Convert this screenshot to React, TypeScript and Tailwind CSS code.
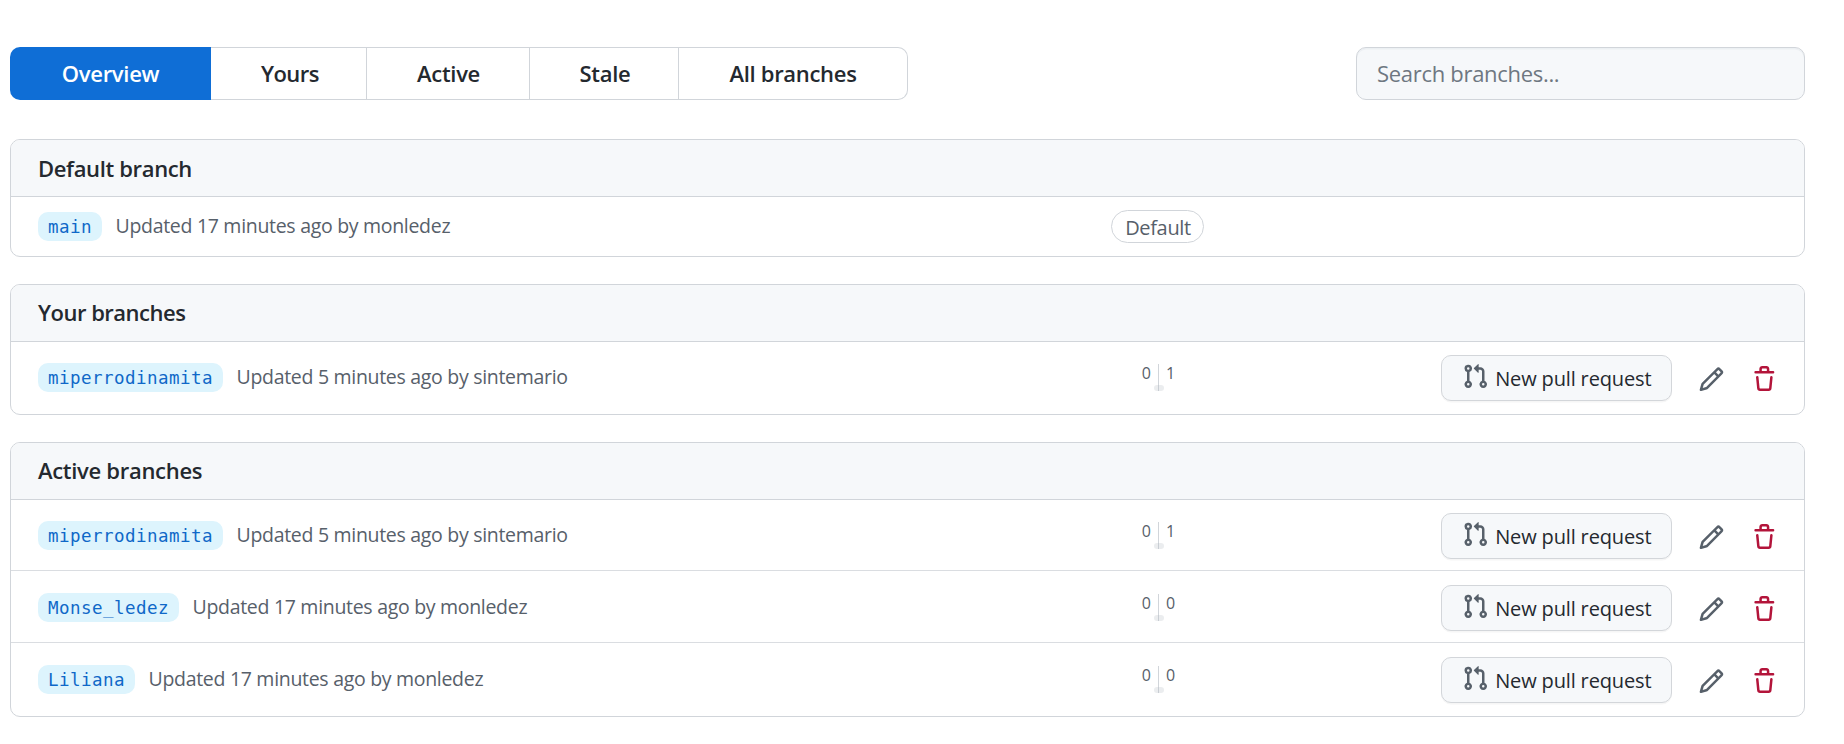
import type { ReactNode } from "react";

type Branch = { name: string; updated: string; behind: number; ahead: number };

const miperrodinamita: Branch = {
  name: "miperrodinamita",
  updated: "Updated 5 minutes ago by sintemario",
  behind: 0,
  ahead: 1,
};

const activeBranches: Branch[] = [
  miperrodinamita,
  { name: "Monse_ledez", updated: "Updated 17 minutes ago by monledez", behind: 0, ahead: 0 },
  { name: "Liliana", updated: "Updated 17 minutes ago by monledez", behind: 0, ahead: 0 },
];

const tabs = [
  { label: "Overview", className: "w-[201px] rounded-l-[10px] bg-[#0f6ed6] text-white" },
  { label: "Yours", className: "w-[156px] border-y border-r border-[#d1d5da] pl-[3px] tracking-[-0.5px]" },
  { label: "Active", className: "w-[163px] border-y border-r border-[#d1d5da] pl-px" },
  { label: "Stale", className: "w-[149px] border-y border-r border-[#d1d5da] pl-[2px]" },
  { label: "All branches", className: "w-[229px] rounded-r-[10px] border-y border-r border-[#d1d5da]" },
];

const icons = {
  pullRequest:
    "M1.5 3.25a2.25 2.25 0 1 1 3 2.122v5.256a2.251 2.251 0 1 1-1.5 0V5.372A2.25 2.25 0 0 1 1.5 3.25Zm5.677-.177L9.573.677A.25.25 0 0 1 10 .854V2.5h1A2.5 2.5 0 0 1 13.5 5v5.628a2.251 2.251 0 1 1-1.5 0V5a1 1 0 0 0-1-1h-1v1.646a.25.25 0 0 1-.427.177L7.177 3.427a.25.25 0 0 1 0-.354ZM3.75 2.5a.75.75 0 1 0 0 1.5.75.75 0 0 0 0-1.5Zm0 9.5a.75.75 0 1 0 0 1.5.75.75 0 0 0 0-1.5Zm8.25.75a.75.75 0 1 0 1.5 0 .75.75 0 0 0-1.5 0Z",
  pencil:
    "M11.013 1.427a1.75 1.75 0 0 1 2.474 0l1.086 1.086a1.75 1.75 0 0 1 0 2.474l-8.61 8.61c-.21.21-.47.364-.756.445l-3.251.93a.75.75 0 0 1-.927-.928l.929-3.25c.081-.286.235-.547.445-.758l8.61-8.61Zm.176 4.823L9.75 4.81l-6.286 6.287a.253.253 0 0 0-.064.108l-.558 1.953 1.953-.558a.253.253 0 0 0 .108-.064Zm1.238-3.763a.25.25 0 0 0-.354 0L10.811 3.75l1.439 1.44 1.263-1.263a.25.25 0 0 0 0-.354Z",
  trash:
    "M11 1.75V3h2.25a.75.75 0 0 1 0 1.5H2.75a.75.75 0 0 1 0-1.5H5V1.75C5 .784 5.784 0 6.75 0h2.5C10.216 0 11 .784 11 1.75ZM4.496 6.675l.66 6.6a.25.25 0 0 0 .249.225h5.19a.25.25 0 0 0 .249-.225l.66-6.6a.75.75 0 0 1 1.492.149l-.66 6.6A1.748 1.748 0 0 1 10.595 15h-5.19a1.75 1.75 0 0 1-1.741-1.575l-.66-6.6a.75.75 0 1 1 1.492-.15ZM6.5 1.75V3h3V1.75a.25.25 0 0 0-.25-.25h-2.5a.25.25 0 0 0-.25.25Z",
};

function Icon({ path, className }: { path: string; className: string }) {
  return (
    <svg viewBox="0 0 16 16" className={`size-[26.67px] shrink-0 fill-current ${className}`}>
      <path d={path} />
    </svg>
  );
}

function BranchInfo({ name, updated }: { name: string; updated: string }) {
  return (
    <div className="flex w-[1100px] items-start pl-[27px]">
      <a className="h-[29px] rounded-[10px] bg-[#ddf4fd] px-2.5 font-['DejaVu_Sans_Mono',monospace] text-[17.5px] leading-[30px] tracking-[0.464px] text-[#0f68c8]">
        {name}
      </a>
      <span className="ml-[13.5px] text-[19.5px] leading-[28px] tracking-[-0.3px] text-[#57606a]">{updated}</span>
    </div>
  );
}

function Divergence({ behind, ahead }: { behind: number; ahead: number }) {
  return (
    <div className="mt-px ml-px flex h-[27px] w-[93px] justify-center text-[16px] leading-[19px] text-[#57606a]">
      <span className="w-[38px] pr-[7px] text-right">{behind}</span>
      <span className="relative h-[27px] w-px bg-[#d1d5da]">
        <span className="absolute bottom-0 -left-1 h-1.5 w-2.5 rounded-[3px] bg-[#afb8c1]/25" />
      </span>
      <span className="w-[38px] pl-[7px]">{ahead}</span>
    </div>
  );
}

function BranchRow({ branch, className }: { branch: Branch; className: string }) {
  return (
    <div className={`flex items-start ${className}`}>
      <div className="mt-2 flex">
        <BranchInfo name={branch.name} updated={branch.updated} />
        <Divergence behind={branch.behind} ahead={branch.ahead} />
      </div>
      <div className="ml-auto flex items-start pr-[26px]">
        <button className="flex h-[46px] w-[231px] items-center rounded-[10px] border border-[#d3d6da] bg-[#f6f8fa] pl-5 text-[20px] font-medium tracking-[-0.15px] text-[#24292f] shadow-[0_1.5px_0_rgba(27,31,36,0.04)]">
          <Icon path={icons.pullRequest} className="-mt-1 mr-[6.5px] text-[#57606a]" />
          <span className="whitespace-nowrap pt-[2px] leading-6">New pull request</span>
        </button>
        <Icon path={icons.pencil} className="mt-[10.5px] ml-[26px] text-[#57606a]" />
        <Icon path={icons.trash} className="mt-[10.5px] ml-[26.66px] text-[#b3143a]" />
      </div>
    </div>
  );
}

function Box({
  title,
  titleClassName,
  className,
  children,
}: {
  title: string;
  titleClassName: string;
  className: string;
  children: ReactNode;
}) {
  return (
    <section className={`overflow-hidden rounded-[10px] border border-[#d1d5da] bg-white ${className}`}>
      <h2
        className={`h-[57px] border-b border-[#d1d5da] bg-[#f6f8fa] pl-[27px] text-[22px] font-semibold text-[#24292f] ${titleClassName}`}
      >
        {title}
      </h2>
      {children}
    </section>
  );
}

export default function App() {
  return (
    <main className="h-[744px] w-[1844px] bg-white pt-[47px] pr-[39px] pl-[10px] font-['Open_Sans','Noto_Sans',sans-serif]">
      <div className="flex items-center justify-between">
        <nav className="flex h-[53px] text-[22px] font-semibold tracking-[-0.3px] text-[#24292f]">
          {tabs.map((tab) => (
            <a key={tab.label} className={`flex items-center justify-center ${tab.className}`}>
              {tab.label}
            </a>
          ))}
        </nav>
        <input
          placeholder="Search branches..."
          className="h-[53px] w-[449px] rounded-[10px] border border-[#d1d5da] bg-[#f6f8fa] px-5 pb-[2px] text-[22px] tracking-[-0.3px] shadow-[inset_0_1.5px_0_rgba(208,215,222,0.25)] outline-none placeholder:text-[#6e7781]"
        />
      </div>

      <Box title="Default branch" titleClassName="leading-[56px] tracking-[-0.35px]" className="mt-[39px] h-[118px]">
        <div className="flex items-start pt-[13px]">
          <div className="mt-[2px]">
            <BranchInfo name="main" updated="Updated 17 minutes ago by monledez" />
          </div>
          <span className="h-[33px] w-[93px] rounded-full border border-[#d1d5da] pt-px pl-px text-center text-[20px] leading-[31px] font-medium tracking-[-0.35px] text-[#57606a]">
            Default
          </span>
        </div>
      </Box>

      <Box title="Your branches" titleClassName="leading-[54px] tracking-[-0.5px]" className="mt-[27px] h-[131px]">
        <BranchRow branch={miperrodinamita} className="pt-[13px]" />
      </Box>

      <Box title="Active branches" titleClassName="leading-[54px] tracking-[-0.3px]" className="mt-[27px] h-[275px]">
        {activeBranches.map((branch, i) => (
          <BranchRow
            key={branch.name}
            branch={branch}
            className={i === 0 ? "h-[70px] pt-[13px]" : "h-[72px] border-t border-[#dadde1] pt-[14px]"}
          />
        ))}
      </Box>
    </main>
  );
}
